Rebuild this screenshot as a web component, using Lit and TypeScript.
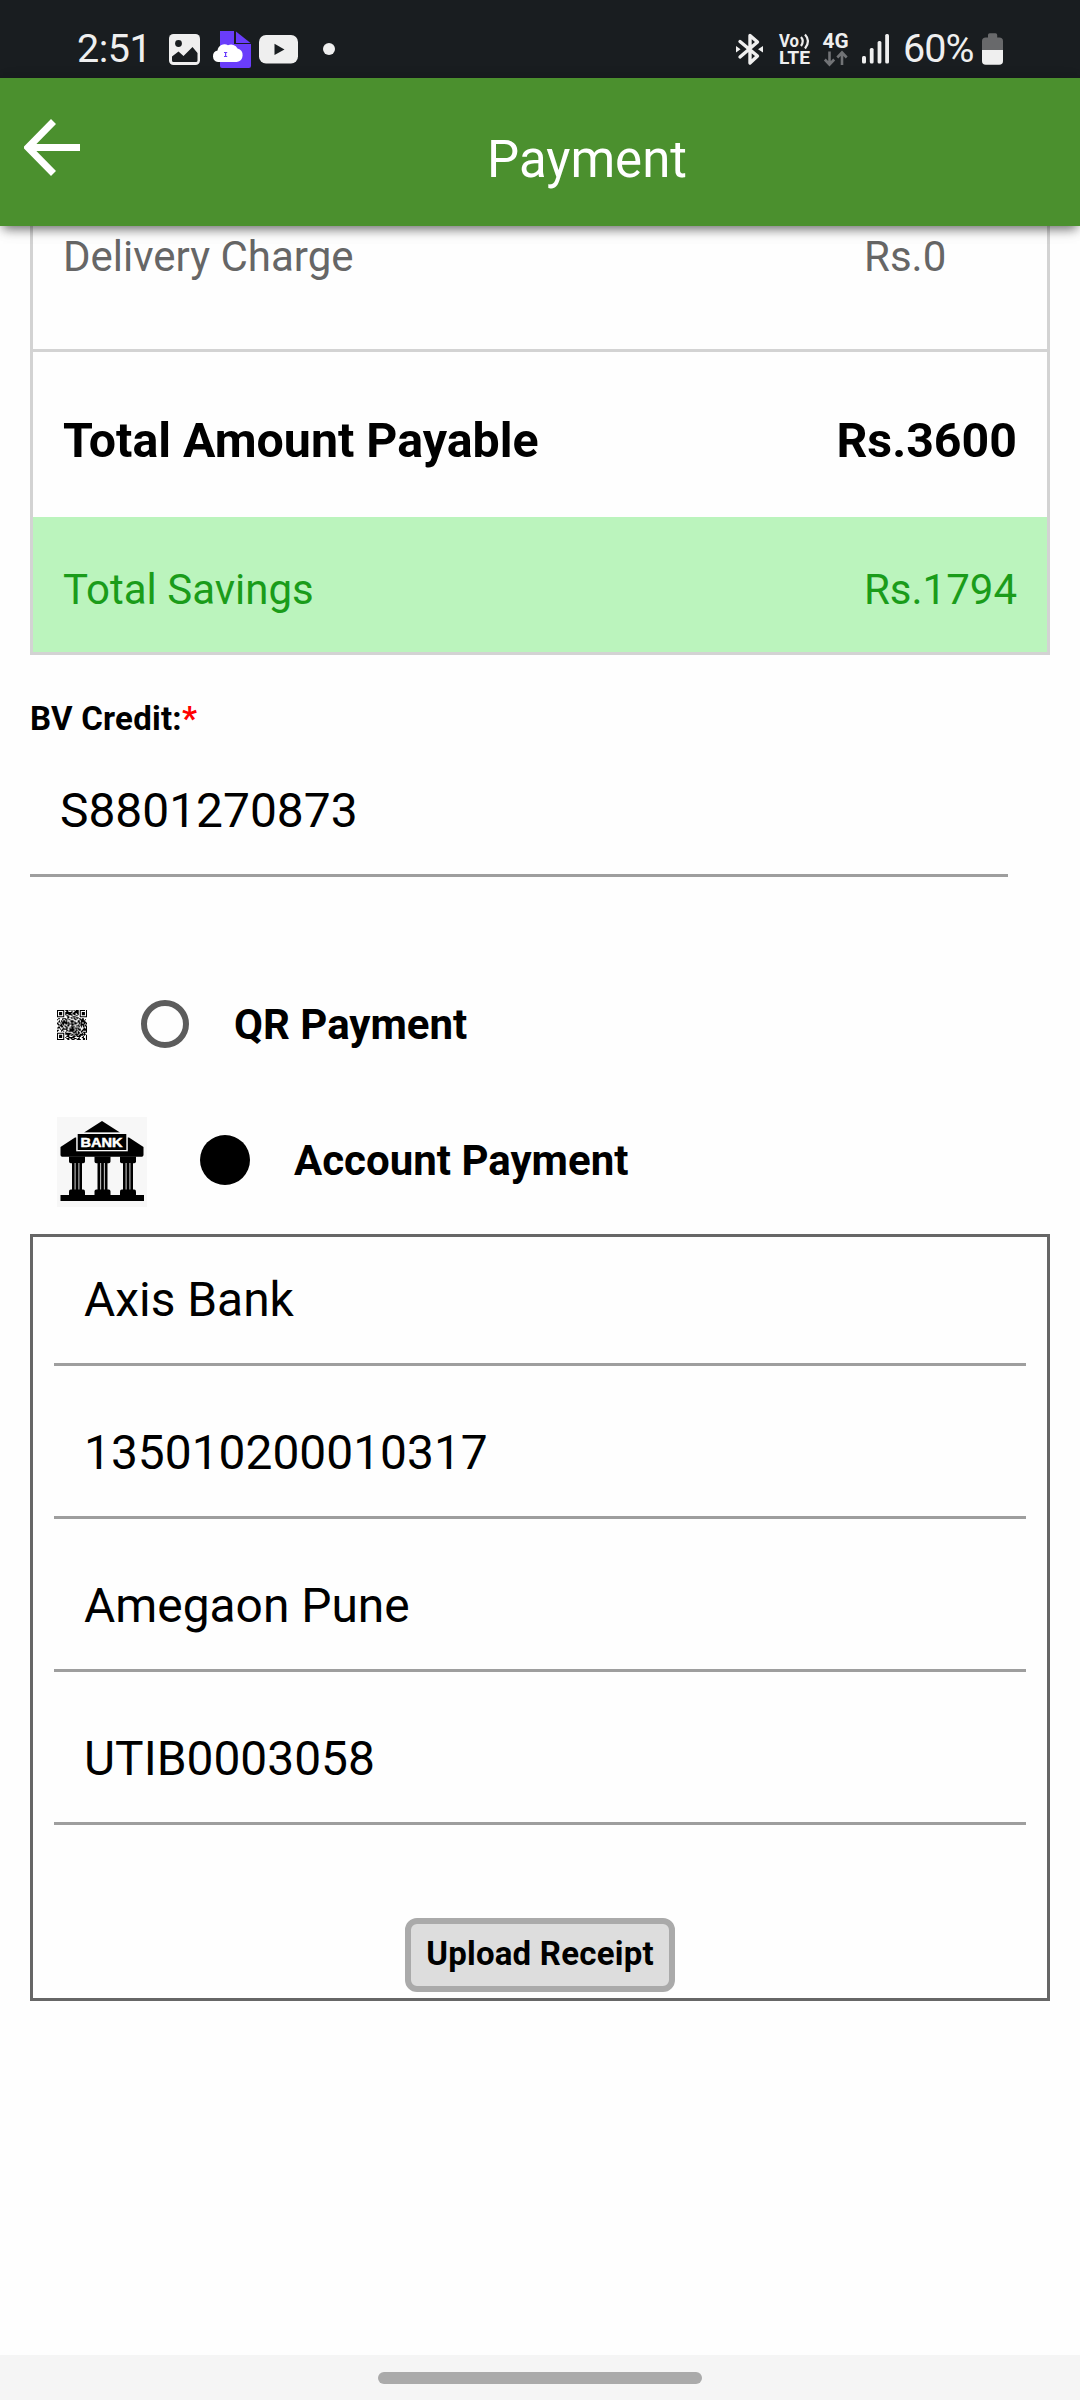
import { LitElement, html, css, svg } from "lit";
import { customElement, property } from "lit/decorators.js";

const INK = "#efefef";

@customElement("status-bar")
class StatusBar extends LitElement {
  static styles = css`
    :host { display: block; }
    .bar { box-sizing: border-box; height: 78px; padding: 19px 77px 0 77px; background: #191d20; color: #efefef; display: flex; align-items: center; justify-content: space-between; font: 400 39.500px/58px Roboto, sans-serif; }
    .group { display: flex; align-items: center; }
    .time { width: 92px; letter-spacing: -0.5px; white-space: nowrap; }
    .left-icons { display: block; width: 170px; height: 40px; }
    .right-icons { display: block; width: 158px; height: 40px; }
    .percent { width: 79px; padding-left: 9px; white-space: nowrap; letter-spacing: -0.9px; }
    .battery { display: block; width: 21px; height: 40px; }
    .tiny { font-family: Roboto, sans-serif; font-weight: 700; fill: #efefef; }
  `;
  render() {
    return html`
      <div class="bar">
        <div class="group">
          <div class="time">2:51</div>
          <svg class="left-icons" viewBox="169 28 170 40">
            <rect x="169" y="33" width="31" height="31" rx="4.5" fill=${INK} />
            <circle cx="178.500" cy="42.500" r="3.400" fill="#191d20" />
            <path d="M172 55.500l6.500-5 5 4.500 9-9 5 6v7.500q0 1.500-1.500 1.500h-22.500q-1.500 0-1.500-1.500z" fill="#191d20" />
            <path d="M220 30h14v13h17v22q0 2-2 2h-27q-2 0-2-2z" fill="#6a3dfb" />
            <path d="M236 30.500L250.500 42H236z" fill="#6a3dfb" />
            <path d="M218 61a5.800 5.800 0 0 1-.5-11.400 7 7 0 0 1 10.500-5.300 7 7 0 0 1 9.500 3.200 6.900 6.900 0 0 1-.8 13.500z" fill="#fff" />
            <path d="M224 51.500h3.200M225.600 51.500v4M224 55.500h3.200" stroke="#6a3dfb" stroke-width="1.200" />
            <rect x="259" y="34" width="39" height="28.500" rx="7" fill=${INK} />
            <path d="M274.500 42.700v11.300l10-5.600z" fill="#191d20" />
            <circle cx="329" cy="48" r="6" fill=${INK} />
          </svg>
        </div>
        <div class="group">
          <svg class="right-icons" viewBox="736 28 158 40">
            <g fill="none" stroke=${INK} stroke-width="3.400" stroke-linejoin="round" stroke-linecap="round">
              <path d="M740 40.500l17.500 14.500-7.500 7V34.500l7.500 6.500L740 56" />
            </g>
            <path d="M736 45l4.500 3.300-4.500 3.300zM763 45l-5 3.300 5 3.300z" fill=${INK} />
            <text class="tiny" x="779" y="46" font-size="17.500" textLength="20" lengthAdjust="spacingAndGlyphs">Vo</text>
            <path d="M801 36q3.500 4 0 9M805 33.500q6 6.500 0 14" fill="none" stroke=${INK} stroke-width="2.200" />
            <text class="tiny" x="779" y="63.300" font-size="19" textLength="31" lengthAdjust="spacingAndGlyphs">LTE</text>
            <text class="tiny" x="822.500" y="46.500" font-size="20.500" textLength="26" lengthAdjust="spacingAndGlyphs">4G</text>
            <path d="M829.500 50.500v12.500M824.800 58.500l4.700 5 4.700-5M842 64V52M837.300 56.500l4.700-5 4.700 5" fill="none" stroke="#717376" stroke-width="2.600" />
            <g fill=${INK}>
              <rect x="862" y="55" width="4" height="7.500" rx="1.500" />
              <rect x="869.800" y="47" width="3.800" height="15.500" rx="1.500" />
              <rect x="877.600" y="40" width="3.800" height="22.500" rx="1.500" />
              <rect x="885.200" y="33" width="3.800" height="29.500" rx="1.500" />
            </g>
          </svg>
          <div class="percent">60%</div>
          <svg class="battery" viewBox="982 28 21 40">
            <path d="M988 34q0-1.700 1.700-1.700h5.800q1.700 0 1.700 1.700v2.500h2q3.800 0 3.800 3.500v9h-21v-9q0-3.500 3.800-3.500h2.200z" fill="#68696b" />
            <path d="M982 49h21v11q0 3.800-3.800 3.800h-13.400q-3.800 0-3.800-3.800z" fill=${INK} />
          </svg>
        </div>
      </div>
    `;
  }
}

@customElement("app-header")
class AppHeader extends LitElement {
  @property() heading = "";
  static styles = css`
    :host { display: block; position: relative; z-index: 1; }
    .bar { height: 148px; display: grid; grid-template-columns: 94px 1fr; background: #4b902e; box-shadow: 0 6px 10px -3px rgba(0, 0, 0, 0.5), 0 3px 18px -4px rgba(0, 0, 0, 0.2); }
    .back { width: 56px; height: 57px; margin: 41px 0 0 24px; display: block; }
    .title { margin-top: 52px; text-align: center; color: #fff; font: 400 51px/60px Roboto, sans-serif; }
  `;
  render() {
    return html`
      <div class="bar">
        <svg class="back" viewBox="0 0 56 57"><path d="M29.500 2.500L4 28.500l25.500 26M4 28.500h52" fill="none" stroke="#fff" stroke-width="7" stroke-linejoin="miter" /></svg>
        <div class="title">${this.heading}</div>
      </div>
    `;
  }
}

const QR_SIZE = 29;

function finderModule(x: number, y: number): boolean | null {
  const corners = [[0, 0], [QR_SIZE - 7, 0], [0, QR_SIZE - 7]];
  for (const [cx, cy] of corners) {
    const dx = x - cx;
    const dy = y - cy;
    if (dx >= -1 && dx <= 7 && dy >= -1 && dy <= 7) {
      const ring = Math.max(Math.abs(dx - 3), Math.abs(dy - 3));
      return ring === 3 || ring <= 1;
    }
  }
  return null;
}

function qrPath(): string {
  let seed = 20613;
  let d = "";
  for (let y = 0; y < QR_SIZE; y++) {
    for (let x = 0; x < QR_SIZE; x++) {
      seed = (seed * 1103515245 + 12345) % 2147483648;
      const fixed = finderModule(x, y);
      const on = fixed === null ? seed / 2147483648 < 0.6 : fixed;
      if (on) d += `M${x} ${y}h1v1h-1z`;
    }
  }
  return d;
}

const column = (x: number) => svg`
  <path d="M${x - 8} 39.500h16v5q0 1.800-1.800 1.800h-12.400q-1.800 0-1.800-1.800z" fill="#000" />
  <path d="M${x - 5} 46h10v27h-10z" fill="#000" />
  <path d="M${x - 1.9} 46v27M${x + 1.9} 46v27" stroke="#bdbdbd" stroke-width="1.100" />
  <path d="M${x - 8} 79v-4.500q0-2 1.800-2h12.400q1.800 0 1.800 2v4.500z" fill="#000" />
`;

@customElement("payment-option")
class PaymentOption extends LitElement {
  @property() label = "";
  @property() kind = "qr";
  @property({ type: Boolean }) selected = false;
  static styles = css`
    :host { display: block; }
    .row { display: flex; align-items: center; padding-left: 27px; }
    .row.qr { height: 60px; }
    .row.bank { height: 90px; }
    .qr-code { display: block; width: 30px; height: 30px; margin-top: 2px; margin-right: 54px; }
    .bank-pic { display: block; width: 90px; height: 90px; margin-right: 53px; }
    .bank-word { font-family: "Liberation Sans", Arial, sans-serif; font-weight: 700; fill: #fff; stroke: #fff; stroke-width: 0.5px; }
    .radio { box-sizing: border-box; width: 48px; height: 48px; border: 6px solid #5c5c5c; border-radius: 50%; }
    .radio.on { width: 50px; height: 50px; border: 0; background: #000; margin-bottom: 4px; }
    .label { margin-left: 45px; color: #000; font: 700 42px/50px Roboto, sans-serif; white-space: nowrap; }
    .qr .label { padding-top: 1px; }
    .bank .label { margin-left: 44px; margin-bottom: 3px; }
  `;
  render() {
    const picture = this.kind === "qr"
      ? html`<svg class="qr-code" viewBox="0 0 29 29"><path d=${qrPath()} fill="#000" /></svg>`
      : html`<svg class="bank-pic" viewBox="0 0 90 90">
          <rect width="90" height="90" fill="#f7f7f7" />
          <path d="M45 4l18 11.500H27z" fill="#000" />
          <path d="M3.500 30L18 20.500h54L86.500 30v8q0 1.700-1.700 1.700H5.200q-1.700 0-1.700-1.700z" fill="#000" />
          <rect x="19.200" y="15.700" width="51.600" height="18.600" fill="#f7f7f7" />
          <rect x="20.700" y="17" width="48.600" height="16" fill="#000" />
          <text class="bank-word" x="23.500" y="29.500" font-size="13" textLength="42" lengthAdjust="spacingAndGlyphs">BANK</text>
          ${column(20)}${column(45.5)}${column(71)}
          <rect x="3.500" y="78" width="83.500" height="6" fill="#000" />
        </svg>`;
    return html`
      <div class="row ${this.kind}">
        ${picture}
        <div class="radio ${this.selected ? "on" : ""}"></div>
        <div class="label">${this.label}</div>
      </div>
    `;
  }
}

@customElement("app-root")
class AppRoot extends LitElement {
  static styles = css`
    :host { display: block; }
    .page { height: 2400px; display: flex; flex-direction: column; background: #fefefe; color: #000; font-family: Roboto, sans-serif; overflow: hidden; }
    .content { flex: 1; padding: 0 30px; }
    .summary { border: 3px solid #d3d3d3; border-top: 0; }
    .line { box-sizing: border-box; display: flex; justify-content: space-between; align-items: center; padding: 0 30px; white-space: nowrap; }
    .delivery { height: 126px; padding-bottom: 61px; border-bottom: 3px solid #d3d3d3; color: #666; font-size: 42px; line-height: 62px; }
    .delivery .amount { width: 153px; }
    .total { height: 165px; padding-top: 12px; font-size: 48.300px; font-weight: 700; }
    .savings { height: 135px; padding-top: 10px; background: #bbf4bd; color: #1a9c1a; font-size: 42px; }
    .caption { margin-top: 44px; font-size: 33px; line-height: 39px; font-weight: 700; letter-spacing: 0.25px; }
    .required { color: #f00; }
    .field { border-bottom: 3px solid #9e9e9e; padding: 59px 30px 35px; font-size: 47.900px; line-height: 56px; }
    .credit { margin: 0 42px 117px 0; padding-top: 45px; }
    .account-option { margin-top: 63px; }
    .account { margin-top: 27px; border: 3px solid #666; padding: 0 21px 6px; display: flex; flex-direction: column; }
    .account .field:first-child { padding-top: 35px; }
    .upload { box-sizing: border-box; align-self: center; width: 270px; height: 74px; margin-top: 93px; padding: 0 0 3px; border: 6px solid #aaa; border-radius: 12px; background: #ddd; color: #000; font: 700 33px/39px Roboto, sans-serif; letter-spacing: 0.22px; white-space: nowrap; }
    .nav { height: 45px; display: flex; justify-content: center; align-items: center; background: #f5f5f5; }
    .pill { width: 324px; height: 12px; border-radius: 6px; background: #aaa; }
  `;
  private account = ["Axis Bank", "135010200010317", "Amegaon Pune", "UTIB0003058"];
  render() {
    return html`
      <div class="page">
        <status-bar></status-bar>
        <app-header heading="Payment"></app-header>
        <div class="content">
          <div class="summary">
            <div class="line delivery"><span>Delivery Charge</span><span class="amount">Rs.0</span></div>
            <div class="line total"><span>Total Amount Payable</span><span>Rs.3600</span></div>
            <div class="line savings"><span>Total Savings</span><span>Rs.1794</span></div>
          </div>
          <div class="caption">BV Credit:<span class="required">*</span></div>
          <div class="field credit">S8801270873</div>
          <payment-option kind="qr" label="QR Payment"></payment-option>
          <payment-option class="account-option" kind="bank" label="Account Payment" selected></payment-option>
          <div class="account">
            ${this.account.map((value) => html`<div class="field">${value}</div>`)}
            <button class="upload">Upload Receipt</button>
          </div>
        </div>
        <div class="nav"><div class="pill"></div></div>
      </div>
    `;
  }
}
